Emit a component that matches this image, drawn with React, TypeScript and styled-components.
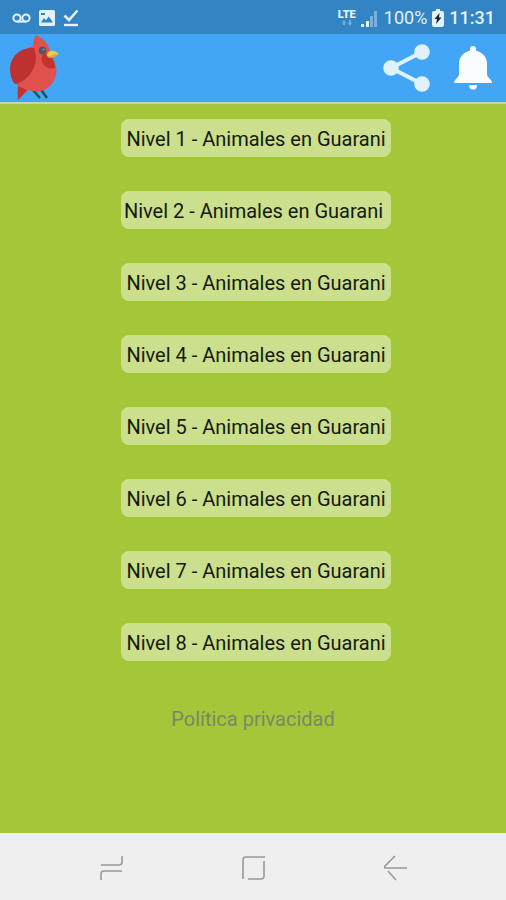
import React from "react";
import styled, { createGlobalStyle } from "styled-components";

const GlobalStyle = createGlobalStyle`
  * { box-sizing: border-box; }
  body { margin: 0; font-family: Roboto, "Liberation Sans", sans-serif; }
`;

const Screen = styled.div`
  display: flex;
  flex-direction: column;
  min-height: 100vh;
  background: #a4c739;
`;

const StatusBar = styled.div`
  display: flex;
  align-items: center;
  justify-content: space-between;
  height: 34px;
  padding: 2px 11px 0 12px;
  background: #3384c4;
  color: #e4f1fb;
  font-size: 18px;
  line-height: 24px;
`;

const StatusGroup = styled.div<{ $gap: number }>`
  display: flex;
  align-items: center;
  gap: ${(p) => p.$gap}px;
`;

const Clock = styled.time`
  font-weight: 500;
`;

const Network = styled.div`
  display: flex;
  flex-direction: column;
  align-items: center;
  font-size: 11px;
  font-weight: 900;
  line-height: 10px;
`;

const Header = styled.header`
  display: flex;
  align-items: center;
  justify-content: space-between;
  height: 70px;
  padding: 0 14px 0 9px;
  background: #42a5f5;
  border-bottom: 2px solid #c5d2c0;
`;

const Actions = styled.div`
  display: flex;
  align-items: center;
  gap: 24px;
`;

const IconButton = styled.button`
  display: flex;
  padding: 0;
  border: 0;
  background: none;
  cursor: pointer;
`;

const Main = styled.main`
  display: flex;
  flex: 1;
  flex-direction: column;
  align-items: center;
  padding: 15px 0 24px;
`;

const Levels = styled.ul`
  display: flex;
  flex-direction: column;
  gap: 34px;
  margin: 0;
  padding: 0 0 0 6px;
  list-style: none;
`;

const LevelButton = styled.button`
  display: block;
  width: 100%;
  padding: 8px 3px 6px;
  border: 0;
  border-radius: 8px;
  background: #cbdf8c;
  color: #141a0c;
  font: 400 20px/24px Roboto, "Liberation Sans", sans-serif;
  white-space: pre;
  cursor: pointer;
`;

const PolicyLink = styled.a`
  margin-top: 46px;
  color: #7a8866;
  font-size: 20px;
  line-height: 24px;
  text-decoration: none;
`;

const NavBar = styled.nav`
  display: flex;
  align-items: center;
  justify-content: center;
  gap: 118px;
  height: 67px;
  padding: 2px 0 0 2px;
  background: #efefef;
`;

function VoicemailIcon() {
  return (
    <svg width="19" height="12" viewBox="0 0 19 12" fill="none" stroke="currentColor" strokeWidth="2" aria-hidden="true">
      <circle cx="5" cy="6" r="3.6" />
      <circle cx="14" cy="6" r="3.6" />
      <path d="M5 9.6h9" />
    </svg>
  );
}

function PictureIcon() {
  return (
    <svg width="16" height="16" viewBox="0 0 16 16" aria-hidden="true">
      <path fill="currentColor" fillRule="evenodd" d="M1.5 0h13Q16 0 16 1.5v13q0 1.500-1.500 1.500h-13Q0 16 0 14.500v-13Q0 0 1.500 0ZM2 12.500h12L9.800 6.500 7 10.200 5 8Z" />
      <path fill="#3384c4" d="M2 3h4v2H2z" />
    </svg>
  );
}

function DoneIcon() {
  return (
    <svg width="16" height="18" viewBox="0 0 16 18" fill="none" stroke="currentColor" aria-hidden="true">
      <path d="M1.500 6.500 6 11 14.500 1.500" strokeWidth="2.600" />
      <path d="M1 16h14" strokeWidth="2.400" />
    </svg>
  );
}

function DataArrows() {
  return (
    <svg width="10" height="6" viewBox="0 0 10 6" fill="#79b0dd" aria-hidden="true">
      <path d="M0 3 2 0l2 3H3v2H1V3ZM6 3h1V0h2v3h1L8 6Z" />
    </svg>
  );
}

function SignalIcon() {
  return (
    <svg width="18" height="17" viewBox="0 0 18 17" aria-hidden="true">
      <path fill="#e4f1fb" d="M0 14h3v3H0ZM5 11h3v6H5Z" />
      <path fill="#79b0dd" d="M9 6h3v11H9ZM13 1h3v16h-3Z" />
    </svg>
  );
}

function BatteryIcon() {
  return (
    <svg width="12" height="18" viewBox="0 0 12 18" aria-hidden="true">
      <path fill="#e4f1fb" d="M4 0h4v2h2q2 0 2 2v12q0 2-2 2H2q-2 0-2-2V4q0-2 2-2h2Z" />
      <path fill="#14222f" d="m7.500 4-5 6H5l-1 5 5.500-6.500H7Z" />
    </svg>
  );
}

function CardinalLogo() {
  return (
    <svg width="50" height="66" viewBox="0 0 50 66" role="img" aria-label="Guarani">
      <path d="m23 54 8 9M30 52l8 11" stroke="#37474f" strokeWidth="2.400" fill="none" />
      <path fill="#e0504c" d="M27 0c6 3 12 7 13.500 15 0 4 2 7 4 10 7 12 1 28-13 31-4 1-8 0-12-1L9 65c-1-5-1-9 0-14C4 45 3 36 5 28c3-9 12-15 19-17 0-4 1-8 3-11Z" />
      <path fill="#bd3231" d="M25 13C10 12 1 23 1 34c0 6 2 12 5 15 13-2 26-20 19-36Z" />
      <path fill="#c33431" d="M34 18c-2 5-2 9 1 12 2 3 6 4 11 3 0-5-2-10-5-13Z" />
      <path fill="#c33431" d="M18 55 9 51v14Z" />
      <circle cx="33.500" cy="15.500" r="3.700" fill="#455a64" />
      <circle cx="34.600" cy="14.500" r="1" fill="#8ca0ab" />
      <path fill="#fbc84a" d="M37.500 20c2-5 8-6 12.500-.500-3-1-8 2-11 2.500Z" />
      <path fill="#e8a93c" d="M38.500 22c3-1 7-4 11-2.500-3 2-7 5-11 2.500Z" />
    </svg>
  );
}

function ShareIcon() {
  return (
    <svg width="47" height="50" viewBox="0 0 47 50" aria-hidden="true">
      <path d="M39 9 8 25l31 16" fill="none" stroke="#e1f2ff" strokeWidth="4" />
      <g fill="#e1f2ff">
        <circle cx="8" cy="25" r="7.800" />
        <circle cx="39" cy="9" r="7.800" />
        <circle cx="39" cy="41" r="7.800" />
      </g>
    </svg>
  );
}

function BellIcon() {
  return (
    <svg width="38" height="44" viewBox="0 0 38 44" fill="#fafdff" aria-hidden="true">
      <path d="M16 4.500V3q0-3 3-3t3 3v1.500c7 2 11 7 11 13V28c0 4 5 5 5 9H0c0-4 5-5 5-9V17.500c0-6 4-11 11-13Z" />
      <path d="M15 39h8q0 4.500-4 4.500T15 39Z" />
    </svg>
  );
}

function NavIcon({ path }: { path: string }) {
  return (
    <svg width="24" height="26" viewBox="0 0 24 26" fill="none" stroke="#999" strokeWidth="1.600" aria-hidden="true">
      <path d={path} />
    </svg>
  );
}

const levels = [
  "Nivel 1 - Animales en Guarani",
  "Nivel 2 - Animales en Guarani ",
  "Nivel 3 - Animales en Guarani",
  "Nivel 4 - Animales en Guarani",
  "Nivel 5 - Animales en Guarani",
  "Nivel 6 - Animales en Guarani",
  "Nivel 7 - Animales en Guarani",
  "Nivel 8 - Animales en Guarani",
];

const navItems = [
  { label: "Recientes", path: "M1 10h18q3 0 3-3V1M22 16H4q-3 0-3 3v6" },
  { label: "Inicio", path: "M23 2H4Q1 2 1 5v19M22 6v15q0 3-3 3H6" },
  { label: "Atrás", path: "M11 1 1 11q-1 1.500 0 2h22M4 16l8 9" },
];

export default function App() {
  return (
    <Screen>
      <GlobalStyle />
      <StatusBar>
        <StatusGroup $gap={8}>
          <VoicemailIcon />
          <PictureIcon />
          <DoneIcon />
        </StatusGroup>
        <StatusGroup $gap={5}>
          <Network>
            LTE
            <DataArrows />
          </Network>
          <SignalIcon />
          <span>100%</span>
          <BatteryIcon />
          <Clock>11:31</Clock>
        </StatusGroup>
      </StatusBar>
      <Header>
        <CardinalLogo />
        <Actions>
          <IconButton type="button" aria-label="Compartir">
            <ShareIcon />
          </IconButton>
          <IconButton type="button" aria-label="Notificaciones">
            <BellIcon />
          </IconButton>
        </Actions>
      </Header>
      <Main>
        <Levels>
          {levels.map((level) => (
            <li key={level}>
              <LevelButton type="button">{level}</LevelButton>
            </li>
          ))}
        </Levels>
        <PolicyLink href="#privacidad">Política privacidad</PolicyLink>
      </Main>
      <NavBar aria-label="Sistema">
        {navItems.map((item) => (
          <IconButton key={item.label} type="button" aria-label={item.label}>
            <NavIcon path={item.path} />
          </IconButton>
        ))}
      </NavBar>
    </Screen>
  );
}
